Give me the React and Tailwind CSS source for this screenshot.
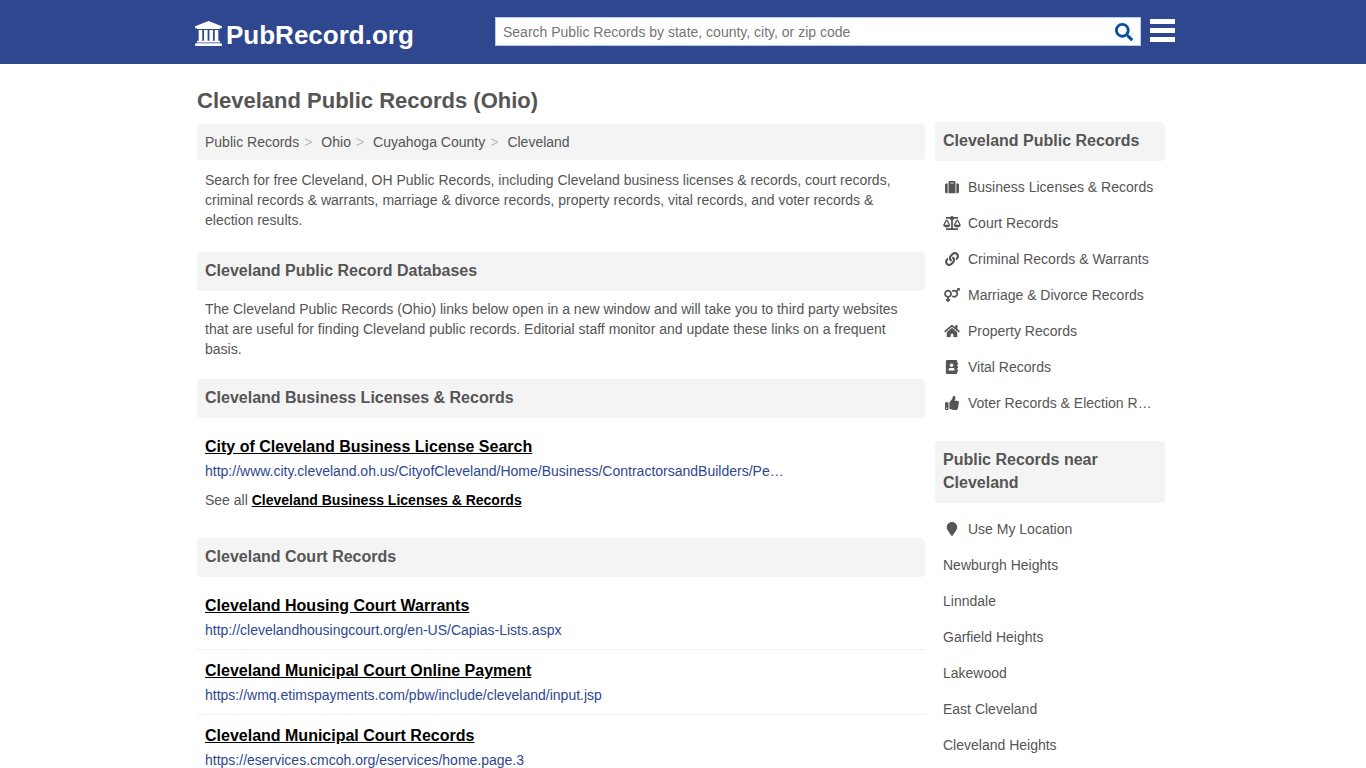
import {
  FaSearch,
  FaSuitcase,
  FaBalanceScale,
  FaLink,
  FaVenusMars,
  FaHome,
  FaAddressBook,
  FaThumbsUp,
  FaMapMarker,
} from 'react-icons/fa'

const crumbs = ['Public Records', 'Ohio', 'Cuyahoga County', 'Cleveland']

const categories = [
  { label: 'Business Licenses & Records', icon: FaSuitcase },
  { label: 'Court Records', icon: FaBalanceScale },
  { label: 'Criminal Records & Warrants', icon: FaLink },
  { label: 'Marriage & Divorce Records', icon: FaVenusMars },
  { label: 'Property Records', icon: FaHome },
  { label: 'Vital Records', icon: FaAddressBook },
  { label: 'Voter Records & Election R…', icon: FaThumbsUp },
]

const nearby = [
  { label: 'Use My Location', icon: FaMapMarker },
  { label: 'Newburgh Heights' },
  { label: 'Linndale' },
  { label: 'Garfield Heights' },
  { label: 'Lakewood' },
  { label: 'East Cleveland' },
  { label: 'Cleveland Heights' },
]

const businessLinks = [
  {
    title: 'City of Cleveland Business License Search',
    url: 'http://www.city.cleveland.oh.us/CityofCleveland/Home/Business/ContractorsandBuilders/Pe…',
  },
]

const courtLinks = [
  {
    title: 'Cleveland Housing Court Warrants',
    url: 'http://clevelandhousingcourt.org/en-US/Capias-Lists.aspx',
  },
  {
    title: 'Cleveland Municipal Court Online Payment',
    url: 'https://wmq.etimspayments.com/pbw/include/cleveland/input.jsp',
  },
  {
    title: 'Cleveland Municipal Court Records',
    url: 'https://eservices.cmcoh.org/eservices/home.page.3',
  },
]

function CourthouseIcon({ className }) {
  return (
    <svg viewBox="0 0 1920 1792" fill="currentColor" aria-hidden="true" className={className}>
      <path d="M960 0l960 384v128h-128q0 26-20.5 45t-48.5 19h-1526q-28 0-48.5-19t-20.5-45h-128v-128z" />
      <path d="M256 640h256v768h128v-768h256v768h128v-768h256v768h128v-768h256v768h59q28 0 48.5 19t20.5 45v64h-1664v-64q0-26 20.5-45t48.5-19h59z" />
      <path d="M1851 1600q28 0 48.5 19t20.5 45v128h-1920v-128q0-26 20.5-45t48.5-19z" />
    </svg>
  )
}

function SectionHeading({ children }) {
  return (
    <h2 className="rounded bg-[#f4f4f4] px-2 pt-[7px] pb-[9px] text-base/[23px] font-bold text-[#555]">
      {children}
    </h2>
  )
}

function LinkList({ links }) {
  return (
    <ul className="mt-2">
      {links.map((link) => (
        <li key={link.url} className="border-b border-[#eee] px-2 py-[9px] last:border-b-0">
          <a href="#" className="text-base/[23px] font-bold text-black underline">
            {link.title}
          </a>
          <p className="mt-[3px] truncate text-sm/5 text-[#2e478f]">{link.url}</p>
        </li>
      ))}
    </ul>
  )
}

function SideList({ title, items }) {
  return (
    <section className="mb-5">
      <SectionHeading>{title}</SectionHeading>
      <ul className="mt-2">
        {items.map(({ label, icon: Icon }) => (
          <li key={label}>
            <a href="#" className="flex items-center px-2 py-2 text-sm/5">
              {Icon && <Icon className="mr-[7px] h-[14px] w-[18px] shrink-0" />}
              <span className="truncate">{label}</span>
            </a>
          </li>
        ))}
      </ul>
    </section>
  )
}

export default function App() {
  return (
    <div className="min-h-screen bg-white font-['Liberation_Sans',Arial,sans-serif] text-sm/5 text-[#555]">
      <header className="bg-[#2e478f]">
        <div className="mx-auto flex h-16 max-w-[984px] items-start pl-1">
          <a href="#" className="mt-5 flex w-[300px] shrink-0 items-start gap-1 text-[26px]/[30px] font-bold text-white">
            <CourthouseIcon className="mt-px h-[25px] w-[27px] shrink-0" />
            PubRecord.org
          </a>
          <form className="mt-[17px] flex h-[29px] flex-1 items-center border border-[#b9cdea] bg-white">
            <input
              type="text"
              aria-label="Search public records"
              placeholder="Search Public Records by state, county, city, or zip code"
              className="h-full min-w-0 flex-1 px-[7px] text-sm text-[#555] outline-none placeholder:text-[#757575]"
            />
            <button type="button" aria-label="Search" className="px-[7px] text-[#0a509f]">
              <FaSearch className="size-[18px]" />
            </button>
          </form>
          <button type="button" aria-label="Menu" className="mt-[19px] ml-[9px] flex w-[25px] flex-col gap-1">
            <span className="h-[5px] w-full bg-white" />
            <span className="h-[5px] w-full bg-white" />
            <span className="h-[5px] w-full bg-white" />
          </button>
        </div>
      </header>

      <div className="mx-auto max-w-[980px] pr-2 pl-1">
        <h1 className="pt-[22px] text-[22px]/[30px] font-bold">Cleveland Public Records (Ohio)</h1>
        <div className="flex items-start gap-[10px] pt-[6px]">
          <main className="min-w-0 flex-1 pt-0.5">
            <nav aria-label="Breadcrumb" className="flex rounded bg-[#f4f4f4] p-2">
              {crumbs.map((crumb, i) => (
                <span key={crumb} className="flex">
                  {i > 0 && <span className="mr-[9px] ml-[5px] text-[#bbb]">&gt;</span>}
                  <a href="#">{crumb}</a>
                </span>
              ))}
            </nav>
            <p className="mt-[10px] mb-[22px] px-2">
              Search for free Cleveland, OH Public Records, including Cleveland business licenses &amp; records, court
              records, criminal records &amp; warrants, marriage &amp; divorce records, property records, vital records,
              and voter records &amp; election results.
            </p>

            <SectionHeading>Cleveland Public Record Databases</SectionHeading>
            <p className="mt-2 mb-5 px-2">
              The Cleveland Public Records (Ohio) links below open in a new window and will take you to third party
              websites that are useful for finding Cleveland public records. Editorial staff monitor and update these
              links on a frequent basis.
            </p>

            <SectionHeading>Cleveland Business Licenses &amp; Records</SectionHeading>
            <LinkList links={businessLinks} />
            <p className="mb-7 px-2">
              See all{' '}
              <a href="#" className="font-bold text-black underline">
                Cleveland Business Licenses &amp; Records
              </a>
            </p>

            <SectionHeading>Cleveland Court Records</SectionHeading>
            <LinkList links={courtLinks} />
          </main>

          <aside className="w-[230px] shrink-0">
            <SideList title="Cleveland Public Records" items={categories} />
            <SideList title="Public Records near Cleveland" items={nearby} />
          </aside>
        </div>
      </div>
    </div>
  )
}
